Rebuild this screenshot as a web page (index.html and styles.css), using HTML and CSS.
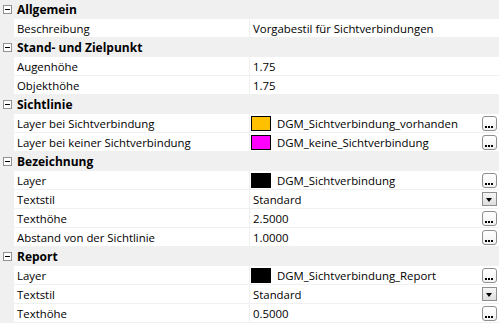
FILE: index.html
```html
<!DOCTYPE html>
<html lang="de">
<head>
  <meta charset="UTF-8" />
  <title>Eigenschaften</title>
  <link rel="stylesheet" href="styles.css">
</head>
<body>
  <div class="grid">
    <div class="cat"><span class="toggle"></span><span class="cat-name">Allgemein</span></div>
    <div class="row">
      <div class="label">Beschreibung</div>
      <div class="value"><span class="text">Vorgabestil für Sichtverbindungen</span></div>
    </div>

    <div class="cat"><span class="toggle"></span><span class="cat-name">Stand- und Zielpunkt</span></div>
    <div class="row">
      <div class="label">Augenhöhe</div>
      <div class="value"><span class="text">1.75</span></div>
    </div>
    <div class="row">
      <div class="label">Objekthöhe</div>
      <div class="value"><span class="text">1.75</span></div>
    </div>

    <div class="cat"><span class="toggle"></span><span class="cat-name">Sichtlinie</span></div>
    <div class="row">
      <div class="label">Layer bei Sichtverbindung</div>
      <div class="value">
        <span class="swatch orange"></span><span class="text layer">DGM_Sichtverbindung_vorhanden</span>
        <span class="btn-dots"></span>
      </div>
    </div>
    <div class="row">
      <div class="label">Layer bei keiner Sichtverbindung</div>
      <div class="value">
        <span class="swatch magenta"></span><span class="text layer">DGM_keine_Sichtverbindung</span>
        <span class="btn-dots"></span>
      </div>
    </div>

    <div class="cat"><span class="toggle"></span><span class="cat-name">Bezeichnung</span></div>
    <div class="row">
      <div class="label">Layer</div>
      <div class="value">
        <span class="swatch black"></span><span class="text layer">DGM_Sichtverbindung</span>
        <span class="btn-dots"></span>
      </div>
    </div>
    <div class="row">
      <div class="label">Textstil</div>
      <div class="value">
        <span class="text">Standard</span>
        <span class="btn-drop"></span>
      </div>
    </div>
    <div class="row">
      <div class="label">Texthöhe</div>
      <div class="value">
        <span class="text">2.5000</span>
        <span class="btn-dots"></span>
      </div>
    </div>
    <div class="row">
      <div class="label">Abstand von der Sichtlinie</div>
      <div class="value">
        <span class="text">1.0000</span>
        <span class="btn-dots"></span>
      </div>
    </div>

    <div class="cat"><span class="toggle"></span><span class="cat-name">Report</span></div>
    <div class="row">
      <div class="label">Layer</div>
      <div class="value">
        <span class="swatch black"></span><span class="text layer">DGM_Sichtverbindung_Report</span>
        <span class="btn-dots"></span>
      </div>
    </div>
    <div class="row">
      <div class="label">Textstil</div>
      <div class="value">
        <span class="text">Standard</span>
        <span class="btn-drop"></span>
      </div>
    </div>
    <div class="row">
      <div class="label">Texthöhe</div>
      <div class="value">
        <span class="text">0.5000</span>
        <span class="btn-dots"></span>
      </div>
    </div>
  </div>
</body>
</html>
```

FILE: styles.css
```css
body {
  margin: 0;
  background-color: #f0f0f0;
  font-family: "Open Sans", "DejaVu Sans", sans-serif;
  font-size: 11.4px;
  color: #000;
}

.grid {
  display: flex;
  flex-direction: column;
  width: 499px;
}

.cat {
  height: 18px;
  border-bottom: 1px solid #f0f0f0;
  background-color: #f0f0f0;
  display: flex;
  align-items: center;
}

.toggle {
  width: 7px;
  height: 7px;
  margin: 0 5px 0 3px;
  border: 1px solid #919191;
  background-color: #fff;
  position: relative;
}

.toggle::after {
  content: "";
  position: absolute;
  left: 1px;
  top: 3px;
  width: 5px;
  height: 1px;
  background-color: #000;
}

.cat-name {
  font-weight: bold;
  font-size: 12px;
}

.row {
  height: 18px;
  margin-left: 14px;
  border-bottom: 1px solid #f0f0f0;
  background-color: #fff;
  display: grid;
  grid-template-columns: 236px 1fr;
}

.label {
  padding-left: 3px;
  border-right: 1px solid #f0f0f0;
  display: flex;
  align-items: center;
  white-space: nowrap;
}

.value {
  padding-left: 3px;
  padding-right: 2px;
  display: flex;
  align-items: center;
  white-space: nowrap;
}

.text {
  flex: 1;
}

.text.layer {
  padding-left: 6px;
}

.swatch {
  width: 18px;
  height: 13px;
  border: 1px solid #000;
  margin-left: -2px;
}

.swatch.orange {
  background-color: #ffc000;
}

.swatch.magenta {
  background-color: #ff00ff;
}

.swatch.black {
  background-color: #000;
}

.btn-dots {
  width: 13px;
  height: 13px;
  border: 1px solid #8f8f8f;
  border-radius: 3px;
  background: linear-gradient(#fff, #f2f2f2);
  position: relative;
}

.btn-dots::after {
  content: "";
  position: absolute;
  left: 2px;
  bottom: 2px;
  width: 2px;
  height: 2px;
  background-color: #000;
  box-shadow: 3px 0 #000, 6px 0 #000;
}

.btn-drop {
  width: 13px;
  height: 12px;
  border: 1px solid #8f8f8f;
  background: linear-gradient(#f6f6f6, #dedede);
  position: relative;
}

.btn-drop::after {
  content: "";
  position: absolute;
  left: 3px;
  top: 5px;
  border-left: 3.5px solid transparent;
  border-right: 3.5px solid transparent;
  border-top: 4px solid #000;
}
```
